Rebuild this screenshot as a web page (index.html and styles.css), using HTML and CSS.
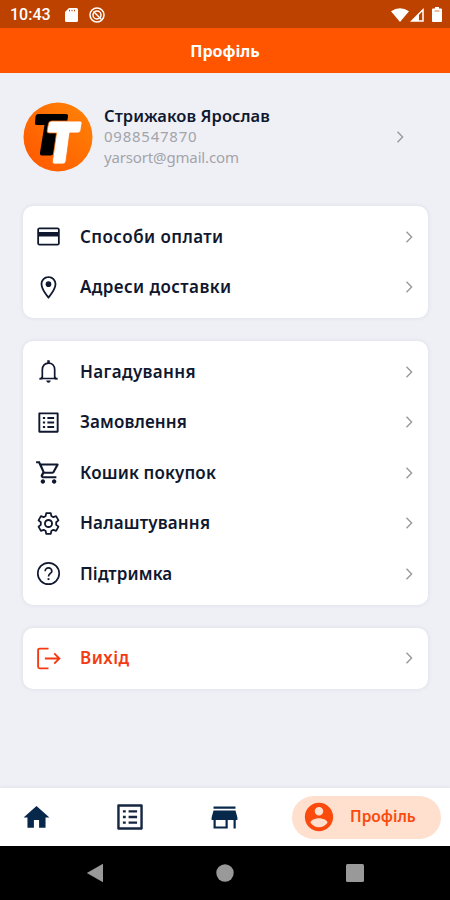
FILE: index.html
```html
<!DOCTYPE html>
<html lang="uk">
<head>
    <meta charset="UTF-8">
    <meta name="viewport" content="width=device-width, initial-scale=1.0">
    <title>Профіль</title>
    <link rel="stylesheet" href="styles.css">
</head>
<body>
    <svg class="sprite">
        <symbol id="chevron" viewBox="0 0 8 14"><path d="M1.5 1.8 6.6 7l-5.1 5.2" fill="none" stroke="currentColor" stroke-width="1.4"/></symbol>
        <symbol id="list" viewBox="0 0 24 24"><path d="M19.300 4.700v14.600H4.700V4.700h14.600M20.100 3H3.900c-.5 0-.9.4-.9.9v16.200c0 .4.4.9.9.9h16.200c.4 0 .9-.5.9-.9V3.900c0-.5-.5-.9-.9-.9zM11 7.200h6v1.600h-6zm0 4h6v1.600h-6zm0 4h6v1.600h-6zM7 7.200h2v1.600H7zm0 4h2v1.600H7zm0 4h2v1.600H7z"/></symbol>
    </svg>

    <div class="screen">
        <div class="status-bar">
            <span class="time">10:43</span>
            <svg class="sd" viewBox="0 0 13 14"><path d="M4 0h7.5Q13 0 13 1.5v11q0 1.5-1.5 1.5h-10Q0 14 0 12.500V4z"/><path d="M4.500 1.800v1.500M7 1.800v1.500M9.500 1.800v1.500" stroke="#bd4200" stroke-width="1"/></svg>
            <svg class="sync" viewBox="0 0 16 16"><g fill="none" stroke="#fff" stroke-width="1.500"><circle cx="8" cy="8" r="7"/><circle cx="8" cy="8" r="4"/><path d="m4.500 4.500 8 8"/></g></svg>
            <div class="signals">
                <svg class="wifi" viewBox="0 0 18 14"><path d="M0 3.200Q9-2.800 18 3.200L9 14z"/></svg>
                <svg class="cell" viewBox="0 0 14 14"><path d="M13 1.800V13H1.800z" fill="none" stroke="#fff" stroke-width="1.500"/><path d="M9 5.500V13H1.800z"/></svg>
                <svg class="battery" viewBox="0 0 10 15"><path d="M3 0h4v1.500h2q1 0 1 1V14q0 1-1 1H1q-1 0-1-1V2.500q0-1 1-1h2z"/><path d="M2.500 4h5" stroke="#d57945"/></svg>
            </div>
        </div>

        <header class="app-bar"><h1>Профіль</h1></header>

        <main class="content">
            <section class="profile">
                <svg class="avatar" viewBox="0 0 70 70">
                    <defs><linearGradient id="orange" x1="0" y1="1" x2="1" y2="0"><stop offset="0" stop-color="#ff5500"/><stop offset="1" stop-color="#ff8506"/></linearGradient></defs>
                    <circle cx="35" cy="35" r="34.500" fill="url(#orange)"/>
                    <path d="M15 12h28q2.500 0 2 2.500l-1 6h-7L30.500 51q-.5 2.500-3 2.500H19q-2.500 0-2-3L21.500 23H14q-2.500 0-2-2.500l.5-6q.3-2.500 2.500-2.500z" fill="#000"/>
                    <path d="M29 19h28q2.500 0 2 2.500l-1.200 7q-.5 2.500-3 2.500h-8L43 59q-.5 3-3 3h-8.500q-2.500 0-2-3L33.500 31h-7.300q-2.500 0-2-2.500l1.300-7q.5-2.500 3.500-2.500z" fill="#fff" stroke="#ff6b03" stroke-width=".8"/>
                </svg>
                <div class="person">
                    <h2>Стрижаков Ярослав</h2>
                    <p class="phone">0988547870</p>
                    <p class="email">yarsort@gmail.com</p>
                </div>
                <svg class="chevron"><use href="#chevron"/></svg>
            </section>

            <nav class="card">
                <a class="row">
                    <svg class="icon" viewBox="0 0 24 24"><path d="M20 4H4c-1.110 0-1.990.89-1.990 2L2 18c0 1.110.89 2 2 2h16c1.110 0 2-.89 2-2V6c0-1.110-.89-2-2-2zm.4 14.400H3.600V12h16.800v6.400zm0-10.400H3.600V5.600h16.800V8z"/></svg>
                    <span class="label payment">Способи оплати</span>
                    <svg class="chevron"><use href="#chevron"/></svg>
                </a>
                <a class="row">
                    <svg class="icon" viewBox="0 0 24 24"><path d="M12 2C8.130 2 5 5.130 5 9c0 5.250 7 13 7 13s7-7.750 7-13c0-3.870-3.130-7-7-7zM6.600 9c0-3 2.400-5.400 5.400-5.400s5.400 2.400 5.400 5.400c0 2.900-2.900 7.600-5.400 10.600C9.500 16.600 6.600 11.900 6.600 9z"/><circle cx="12" cy="9" r="2.500"/></svg>
                    <span class="label address">Адреси доставки</span>
                    <svg class="chevron"><use href="#chevron"/></svg>
                </a>
            </nav>

            <nav class="card">
                <a class="row">
                    <svg class="icon" viewBox="0 0 24 24"><path d="M4 18.200h16M6.500 18v-7.500c0-3.600 2.300-6 5.500-6s5.500 2.400 5.500 6V18" fill="none" stroke="currentColor" stroke-width="1.500"/><path d="M10.900 2h2.200v2.500h-2.200zM10 20h4c0 1.100-.9 2-2 2s-2-.9-2-2zM6.500 16l-3 3h3zM17.500 16l3 3h-3z"/></svg>
                    <span class="label reminders">Нагадування</span>
                    <svg class="chevron"><use href="#chevron"/></svg>
                </a>
                <a class="row">
                    <svg class="icon"><use href="#list"/></svg>
                    <span class="label orders">Замовлення</span>
                    <svg class="chevron"><use href="#chevron"/></svg>
                </a>
                <a class="row">
                    <svg class="icon" viewBox="0 0 24 24"><path d="M15.550 13c.75 0 1.410-.41 1.750-1.030l3.580-6.490A.996.996 0 0 0 20.010 4H5.210l-.94-2H1v1.700h2l3.600 7.890-1.350 2.440C4.520 15.370 5.480 17 7 17h12v-1.700H7l1.100-2.300h7.450zM6.160 5.700h12.400l-3 5.600H8.530L6.160 5.700zM7 18c-1.100 0-1.990.9-1.990 2S5.900 22 7 22s2-.9 2-2-.9-2-2-2zm10 0c-1.100 0-1.990.9-1.990 2s.89 2 1.990 2 2-.9 2-2-.9-2-2-2z"/></svg>
                    <span class="label cart">Кошик покупок</span>
                    <svg class="chevron"><use href="#chevron"/></svg>
                </a>
                <a class="row">
                    <svg class="icon" viewBox="0 0 26 26"><path d="m10.800 3-.5 2.700-2 1.200-2.600-1L3.400 10l2.200 1.800v2.400L3.400 16l2.300 4.100 2.600-1 2 1.200.5 2.700h4.400l.5-2.700 2-1.200 2.600 1 2.300-4.100-2.200-1.800v-2.400L22.600 10l-2.300-4.100-2.600 1-2-1.200-.5-2.700z" fill="none" stroke="currentColor" stroke-width="1.700" stroke-linejoin="round"/><circle cx="13" cy="13" r="3.400" fill="none" stroke="currentColor" stroke-width="1.800"/></svg>
                    <span class="label settings">Налаштування</span>
                    <svg class="chevron"><use href="#chevron"/></svg>
                </a>
                <a class="row">
                    <svg class="icon" viewBox="0 0 26 26"><circle cx="13" cy="13" r="10.300" fill="none" stroke="currentColor" stroke-width="1.600"/><path d="M9.800 10.800a3.200 3.200 0 0 1 6.400 0c0 2-3.200 2.400-3.200 5" fill="none" stroke="currentColor" stroke-width="1.600"/><path d="M12.100 17.500h1.800v1.800h-1.800z"/></svg>
                    <span class="label support">Підтримка</span>
                    <svg class="chevron"><use href="#chevron"/></svg>
                </a>
            </nav>

            <nav class="card">
                <a class="row exit">
                    <svg class="icon" viewBox="0 0 26 26"><path d="M13 3.500H4.500Q3 3.500 3 5v16q0 1.500 1.500 1.500H13M9.500 13h14M18.500 8l5 5-5 5" fill="none" stroke="currentColor" stroke-width="1.800"/></svg>
                    <span class="label logout">Вихід</span>
                    <svg class="chevron"><use href="#chevron"/></svg>
                </a>
            </nav>
        </main>

        <nav class="tab-bar">
            <a class="tab"><svg viewBox="0 0 24 24"><path d="M10 20v-6h4v6h5v-8h3L12 3 2 12h3v8z"/></svg></a>
            <a class="tab orders-tab"><svg><use href="#list"/></svg></a>
            <a class="tab"><svg viewBox="0 0 24 24"><path d="M3.500 3.500h17v1.700h-17zM3.500 6.500h17L22 12v2h-1.300v6.500h-1.700V14h-4.500v6.500h-11V14H2v-2zM5.200 14v4.900h7.600V14z"/></svg></a>
            <a class="tab-active">
                <svg viewBox="0 0 24 24"><path d="M12 2C6.480 2 2 6.480 2 12s4.480 10 10 10 10-4.480 10-10S17.520 2 12 2zm0 3c1.660 0 3 1.340 3 3s-1.340 3-3 3-3-1.340-3-3 1.340-3 3-3zm0 14.200c-2.500 0-4.710-1.280-6-3.220.03-1.990 4-3.080 6-3.080 1.990 0 5.970 1.090 6 3.080-1.290 1.940-3.500 3.220-6 3.220z"/></svg>
                <span>Профіль</span>
            </a>
        </nav>

        <div class="system-bar">
            <svg viewBox="0 0 18 20"><path d="M17 .8v18.400L.8 10z"/></svg>
            <svg viewBox="0 0 18 18"><circle cx="9" cy="9" r="8.700"/></svg>
            <svg viewBox="0 0 18 18"><rect width="18" height="18" rx="1.500"/></svg>
        </div>
    </div>
</body>
</html>
```
FILE: styles.css
```css
:root {
    --orange: #ff5500;
    --navy: #10182f;
    --page: #eff0f6;
    --gray: #a3a4a9;
}

* {
    box-sizing: border-box;
}

body {
    margin: 0;
    font-family: "Noto Sans", "Open Sans", sans-serif;
    color: var(--navy);
    background: var(--page);
}

svg {
    display: block;
    flex: none;
    fill: currentColor;
}

.sprite {
    display: none;
}

.screen {
    display: flex;
    flex-direction: column;
    width: 450px;
    height: 900px;
    overflow: hidden;
}

.status-bar {
    display: flex;
    align-items: center;
    height: 28px;
    padding: 1px 8px 0 10px;
    color: #fff;
    background: #bd4200;
}

.time {
    width: 55px;
    font: 500 16px Roboto, sans-serif;
}

.sd {
    width: 13px;
    height: 14px;
}

.sync {
    width: 16px;
    height: 16px;
    margin-left: 11px;
}

.signals {
    display: flex;
    align-items: center;
    margin-left: auto;
}

.wifi {
    width: 18px;
    height: 14px;
}

.cell {
    width: 14px;
    height: 14px;
    margin: 0 8px 0 1px;
}

.battery {
    width: 10px;
    height: 15px;
}

.app-bar {
    display: flex;
    align-items: center;
    justify-content: center;
    height: 45px;
    color: #fff;
    background: var(--orange);
}

.app-bar h1 {
    margin: 0;
    font-size: 16px;
    font-weight: 700;
    line-height: 24px;
}

.content {
    flex: 1;
    padding: 29px 22px 0 23px;
}

.profile {
    display: flex;
    align-items: center;
    height: 70px;
    margin-bottom: 34px;
    padding-right: 24px;
}

.avatar {
    width: 70px;
    height: 70px;
}

.person {
    flex: 1;
    padding: 0 0 2px 11px;
}

.person h2,
.person p {
    margin: 0;
    font-size: 15px;
    line-height: 21px;
    white-space: nowrap;
}

.person h2 {
    font-size: 16.5px;
    font-weight: 600;
    letter-spacing: 0.05px;
}

.person p {
    color: var(--gray);
}

.person .phone {
    letter-spacing: 0.75px;
}

.person .email {
    letter-spacing: -0.15px;
}

.chevron {
    width: 8px;
    height: 14px;
    color: #999;
}

.card {
    margin-bottom: 23px;
    padding: 5.5px 15px 5.5px 12px;
    background: #fff;
    border-radius: 10px;
    box-shadow: 0 0 4px rgba(40, 45, 80, 0.1);
}

.row {
    display: flex;
    align-items: center;
    height: 50.5px;
}

.icon {
    width: 27px;
    height: 27px;
}

.label {
    flex: 1;
    padding-left: 18px;
    font-size: 17px;
    font-weight: 600;
    line-height: 24px;
    white-space: nowrap;
}

.payment { letter-spacing: 0.43px; }
.address { letter-spacing: 0.4px; }
.reminders { letter-spacing: 0.35px; }
.orders { letter-spacing: 0.12px; }
.cart { letter-spacing: 0.14px; }
.settings { letter-spacing: 0.17px; }
.support { letter-spacing: 0.1px; }
.logout { letter-spacing: 0.5px; }

.exit .icon,
.exit .label {
    color: #f43a12;
}

.tab-bar {
    display: flex;
    align-items: center;
    height: 58px;
    padding-right: 9px;
    color: #08284b;
    background: #fff;
    box-shadow: 0 -1px 3px rgba(40, 45, 80, 0.07);
}

.tab {
    display: flex;
    justify-content: center;
    width: 94px;
    padding-right: 22px;
}

.tab svg {
    width: 31px;
    height: 31px;
}

.orders-tab {
    color: #152641;
}

.orders-tab svg {
    width: 34px;
    height: 34px;
}

.tab-active {
    display: flex;
    align-items: center;
    width: 149px;
    height: 43px;
    margin-left: auto;
    padding-left: 10px;
    color: #fa4a0c;
    background: #ffdfce;
    border-radius: 22px;
}

.tab-active svg {
    width: 34px;
    height: 34px;
}

.tab-active span {
    margin-left: 14px;
    padding-bottom: 2px;
    font-size: 15.5px;
    font-weight: 600;
}

.system-bar {
    display: flex;
    align-items: center;
    justify-content: space-between;
    height: 54px;
    padding: 0 86px;
    color: #999;
    background: #000;
}

.system-bar svg {
    width: 18px;
    height: 20px;
}
```
